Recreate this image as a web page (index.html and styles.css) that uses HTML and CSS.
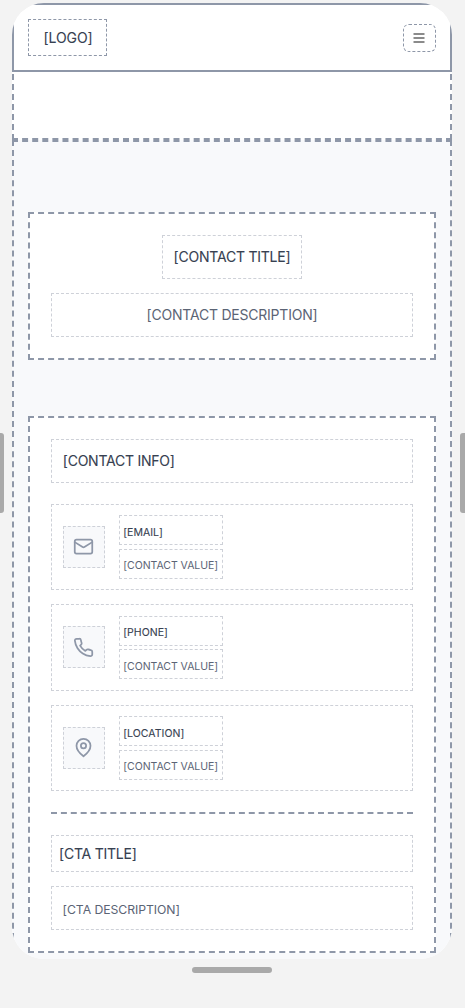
FILE: index.html
```html
<!DOCTYPE html>
<html lang="en">
<head>
<meta charset="utf-8">
<title>Contact</title>
<link rel="stylesheet" href="styles.css">
</head>
<body>
<div class="frame">
  <header class="header">
    <div class="logo">[LOGO]</div>
    <button class="menu" aria-label="Menu"><svg width="12" height="12" viewBox="0 0 12 12"><path d="M.5 2H11.5M.5 6H11.5M.5 10H11.5"/></svg></button>
  </header>
  <section class="hero"></section>
  <main class="content">
    <section class="card intro">
      <h1 class="box intro-title">[CONTACT TITLE]</h1>
      <p class="box intro-text">[CONTACT DESCRIPTION]</p>
    </section>
    <section class="card details">
      <h2 class="box info-title">[CONTACT INFO]</h2>
      <div class="items">
        <div class="box item">
          <div class="box icon"><svg viewBox="0 0 24 24"><rect x="2" y="4" width="20" height="16" rx="2"/><path d="m22 7-8.97 5.7a1.94 1.94 0 0 1-2.06 0L2 7"/></svg></div>
          <div class="pair"><div class="box label">[EMAIL]</div><div class="box value">[CONTACT VALUE]</div></div>
        </div>
        <div class="box item">
          <div class="box icon"><svg viewBox="0 0 24 24"><path d="M22 16.92v3a2 2 0 0 1-2.18 2 19.79 19.79 0 0 1-8.63-3.07 19.5 19.5 0 0 1-6-6 19.79 19.79 0 0 1-3.07-8.67A2 2 0 0 1 4.11 2h3a2 2 0 0 1 2 1.72 12.84 12.84 0 0 0 .7 2.81 2 2 0 0 1-.45 2.11L8.09 9.91a16 16 0 0 0 6 6l1.27-1.27a2 2 0 0 1 2.11-.45 12.84 12.84 0 0 0 2.81.7A2 2 0 0 1 22 16.92z"/></svg></div>
          <div class="pair"><div class="box label">[PHONE]</div><div class="box value">[CONTACT VALUE]</div></div>
        </div>
        <div class="box item">
          <div class="box icon"><svg viewBox="0 0 24 24"><path d="M20 10c0 6-8 12-8 12s-8-6-8-12a8 8 0 0 1 16 0Z"/><circle cx="12" cy="10" r="3"/></svg></div>
          <div class="pair"><div class="box label">[LOCATION]</div><div class="box value">[CONTACT VALUE]</div></div>
        </div>
      </div>
      <div class="cta">
        <h3 class="box cta-title">[CTA TITLE]</h3>
        <p class="box cta-text">[CTA DESCRIPTION]</p>
      </div>
    </section>
  </main>
</div>
<div class="handle handle-left"></div>
<div class="handle handle-right"></div>
<div class="handle handle-bottom"></div>
</body>
</html>
```
FILE: styles.css
```css
* { box-sizing: border-box; }
body {
  margin: 0;
  height: 1008px;
  padding: 3px 13px 0 12px;
  position: relative;
  overflow: hidden;
  background: #f3f3f3;
  font-family: Inter, "Liberation Sans", sans-serif;
  font-size: 14px;
  color: #374151;
}
h1, h2, h3, p { margin: 0; font: inherit; }
.frame {
  width: 440px;
  height: 956px;
  border-radius: 32px;
  overflow: hidden;
  background: #fff;
}
.header {
  position: relative;
  z-index: 1;
  display: flex;
  align-items: center;
  justify-content: space-between;
  height: 69px;
  padding: 0 14px;
  background: #fff;
  border: 2px solid #8e97a8;
}
.logo {
  width: 79px;
  height: 37px;
  padding-left: 1px;
  border: 1px dashed #8e97a8;
  line-height: 36px;
  text-align: center;
  letter-spacing: -.1px;
}
.logo, .intro-title, .info-title, .cta-title, .label { -webkit-text-stroke: .1px currentColor; }
.menu {
  display: grid;
  place-items: center;
  width: 33px;
  height: 28px;
  padding: 0 2px 0 0;
  border: 1px dashed #8e97a8;
  border-radius: 6px;
  background: #fff;
}
.menu svg { stroke: #666; stroke-width: 1.7; }
.hero {
  height: 76px;
  margin-top: -8px;
  border: 2px dashed #8e97a8;
}
.content {
  height: 1100px;
  padding: 70px 14px;
  border: 2px dashed #8e97a8;
  background: #f8f9fb;
}
.card {
  padding: 21px;
  border: 2px dashed #8e97a8;
  background: #fff;
}
.box { border: 1px dashed #ced1d8; }
.intro {
  display: flex;
  flex-direction: column;
  align-items: center;
  gap: 14px;
  height: 148px;
  margin-bottom: 56px;
}
.intro-title, .intro-text { height: 44px; line-height: 42px; text-align: center; letter-spacing: -.22px; }
.intro-title { width: 140px; }
.intro-text { width: 100%; color: #5b6475; }
.info-title { height: 43.7px; padding-left: 10.8px; line-height: 42px; letter-spacing: -.24px; }
.items { display: flex; flex-direction: column; gap: 14px; padding: 21px 0; }
.item { display: flex; align-items: center; gap: 14px; height: 86.5px; padding: 0 11px; }
.icon { display: grid; place-items: center; width: 42px; height: 42px; padding-right: 2px; background: #f8f9fb; }
.icon svg { width: 21px; height: 21px; fill: none; stroke: #8e97a8; stroke-width: 2; stroke-linecap: round; stroke-linejoin: round; }
.pair { display: flex; flex-direction: column; gap: 3.5px; width: 104px; }
.label, .value { height: 30px; padding: 2.7px 0 0 3.2px; line-height: 27px; font-size: 10.5px; white-space: nowrap; }
.label { padding-top: 2.4px; line-height: 28px; letter-spacing: .04px; }
.value { color: #5b6475; letter-spacing: -.02px; }
.cta { padding-top: 21px; border-top: 2px dashed #8e97a8; }
.cta-title { height: 37px; margin-bottom: 14px; padding-left: 7px; line-height: 35px; letter-spacing: -.22px; }
.cta-text { height: 44px; padding: 2px 0 0 10.6px; line-height: 42px; font-size: 12.25px; letter-spacing: -.07px; color: #5b6475; }
.handle { position: absolute; background: #a9a9a9; }
.handle-left { left: 0; top: 433px; width: 4px; height: 80px; border-radius: 0 3px 3px 0; }
.handle-right { right: 0; top: 433px; width: 5px; height: 80px; border-radius: 3px 0 0 3px; }
.handle-bottom { left: 192px; top: 967px; width: 80px; height: 6px; border-radius: 3px; }
```
